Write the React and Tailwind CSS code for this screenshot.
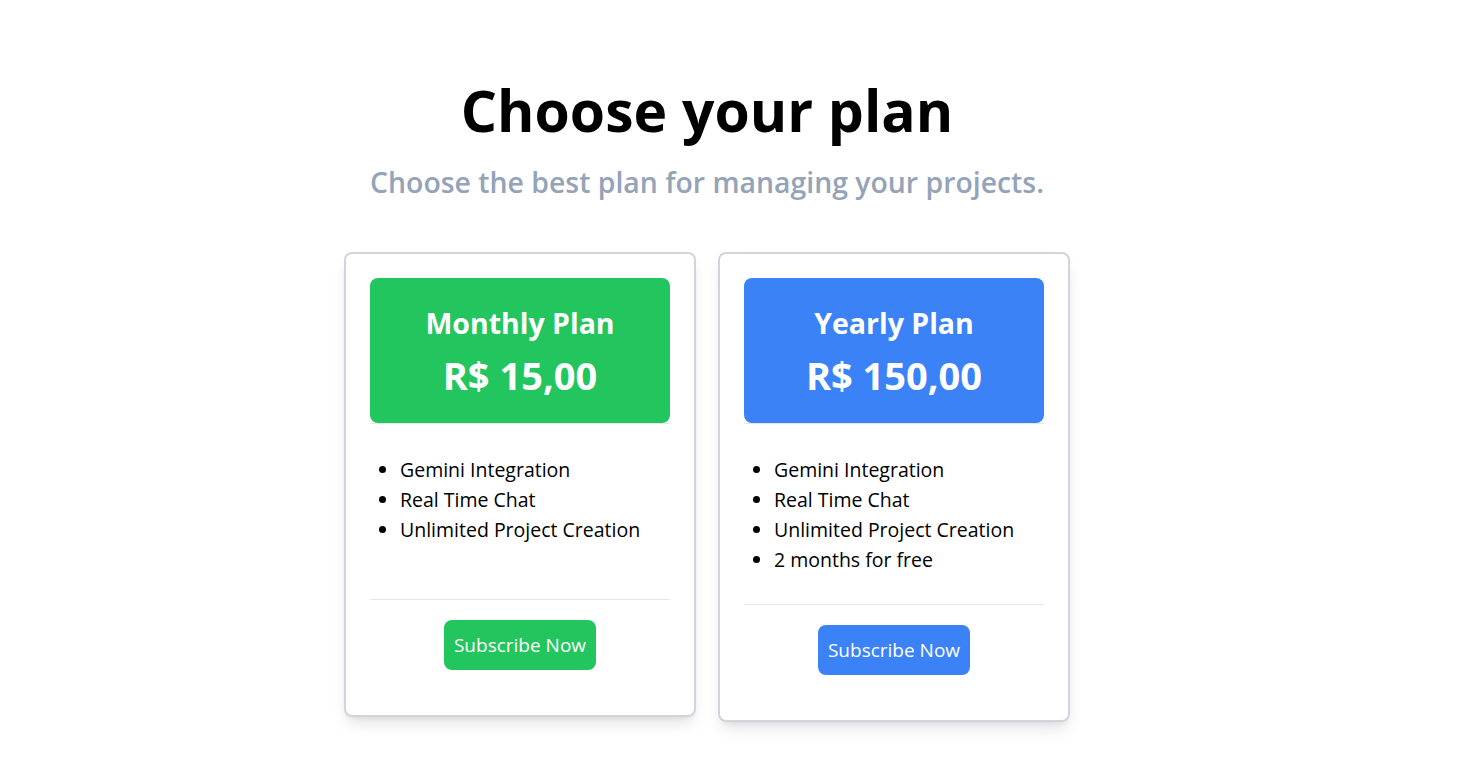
import React from "react";

const plans = [
  {
    name: "Monthly Plan",
    price: "R$ 15,00",
    color: "bg-[#22c55e]",
    features: ["Gemini Integration", "Real Time Chat", "Unlimited Project Creation"],
  },
  {
    name: "Yearly Plan",
    price: "R$ 150,00",
    color: "bg-[#3b82f6]",
    features: ["Gemini Integration", "Real Time Chat", "Unlimited Project Creation", "2 months for free"],
  },
];

function Card({ plan }) {
  return (
    <div className="w-[352px] rounded-lg border-2 border-[#d1d5db] bg-white p-6 shadow-lg flex flex-col">
      <div className="border-b border-[#e5e7eb]">
        <div className={`${plan.color} rounded-lg h-[145px] flex flex-col items-center justify-center text-white font-bold`}>
          <div className="text-[28.5px] leading-[36px]">{plan.name}</div>
          <div className="text-[38px] leading-[44px] mt-[12px]">{plan.price}</div>
        </div>
      </div>
      <div className="min-h-[175px] pt-[31px] pb-[29px]">
        <ul className="list-disc pl-[30px] text-[19.5px] leading-[30px] text-black">
          {plan.features.map((f) => (
            <li key={f}>{f}</li>
          ))}
        </ul>
      </div>
      <div className="border-t border-[#e5e7eb] pt-[20px] pb-[21px] flex justify-center">
        <button className={`${plan.color} text-white text-[19px] leading-[25px] rounded-lg h-[50px] w-[152px]`}>
          Subscribe Now
        </button>
      </div>
    </div>
  );
}

export default function App() {
  return (
    <div
      className="min-h-screen bg-white pr-[45px] pt-[77px] flex flex-col items-center"
      style={{ fontFamily: '"Segoe UI", "Open Sans", sans-serif' }}
    >
      <h1 className="text-[57px] leading-[66px] font-bold text-black">Choose your plan</h1>
      <p className="text-[28.4px] leading-[40px] font-semibold text-[#94a3b8] mt-[19px]">
        Choose the best plan for managing your projects.
      </p>
      <div className="mt-[50px] flex items-start gap-[22px]">
        {plans.map((p) => (
          <Card key={p.name} plan={p} />
        ))}
      </div>
    </div>
  );
}
